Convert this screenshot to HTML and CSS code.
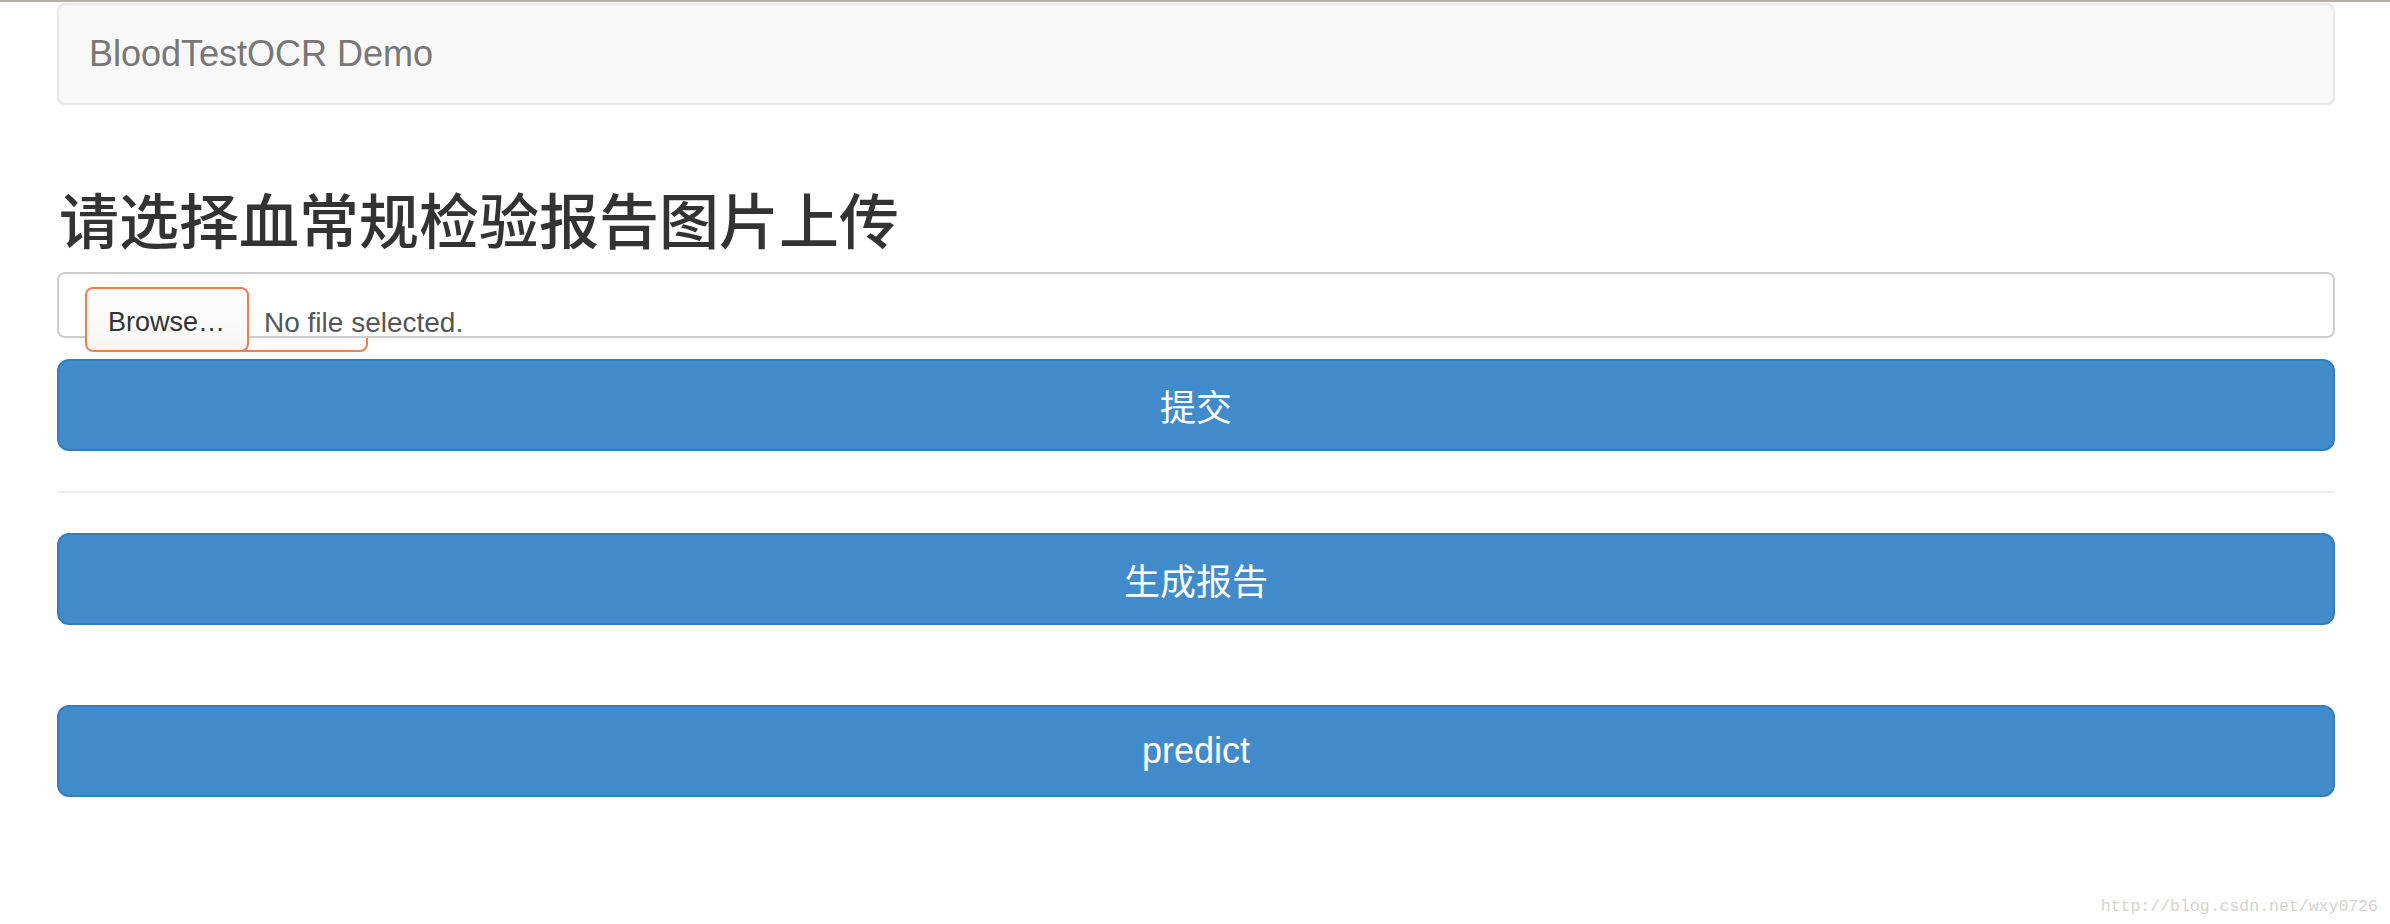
FILE: index.html
```html
<!DOCTYPE html>
<html lang="zh-CN">
<head>
<meta charset="utf-8">
<title>BloodTestOCR Demo</title>
<link rel="stylesheet" href="styles.css">
</head>
<body>
<div class="topline"></div>
<div class="container">
  <nav class="navbar">
    <span class="brand">BloodTestOCR Demo</span>
  </nav>
  <h2 class="title">请选择血常规检验报告图片上传</h2>
  <div class="file-box">
    <span class="browse">Browse…</span>
    <span class="file-name">No file selected.</span>
    <span class="focus-ghost"></span>
  </div>
  <button class="btn btn-first">提交</button>
  <hr class="divider">
  <button class="btn">生成报告</button>
  <button class="btn btn-last">predict</button>
</div>
<div class="watermark">http://blog.csdn.net/wxy0726</div>
</body>
</html>
```
FILE: styles.css
```css
html, body {
  margin: 0;
  padding: 0;
  background: #ffffff;
}
body {
  font-family: "Liberation Sans", Arial, "Noto Sans CJK SC", sans-serif;
  color: #333333;
  position: relative;
  height: 924px;
  overflow: hidden;
}
.topline {
  height: 2px;
  background: #b3afa9;
}
.container {
  padding: 0 55px 0 57px;
  display: flex;
  flex-direction: column;
}
.navbar {
  margin-top: 1px;
  height: 102px;
  box-sizing: border-box;
  background: #f8f8f8;
  border: 2px solid #e7e7e7;
  border-radius: 8px;
  display: flex;
  align-items: center;
  padding-left: 30px;
}
.brand {
  font-size: 36px;
  color: #777777;
  line-height: 40px;
}
.title {
  margin: 80px 0 21px 2px;
  font-family: "Noto Sans CJK SC", "Liberation Sans", sans-serif;
  font-weight: 500;
  font-size: 60px;
  line-height: 66px;
  color: #333333;
}
.file-box {
  position: relative;
  height: 66px;
  box-sizing: border-box;
  border: 2px solid #cccccc;
  border-radius: 8px;
  background: #ffffff;
  display: flex;
  align-items: flex-start;
  padding: 13px 0 0 26px;
}
.browse {
  position: relative;
  z-index: 1;
  box-sizing: border-box;
  height: 65px;
  width: 164px;
  border: 2px solid #ef7f52;
  border-radius: 8px;
  background: linear-gradient(#ffffff, #f6f6f6);
  font-size: 27px;
  color: #333333;
  padding: 5px 0 0 21px;
  line-height: 57px;
  white-space: nowrap;
}
.file-name {
  margin: 20px 0 0 15px;
  font-size: 28px;
  line-height: 32px;
  color: #555555;
}
.focus-ghost {
  position: absolute;
  left: 143px;
  top: 64px;
  width: 166px;
  height: 14px;
  box-sizing: border-box;
  border: 2px solid #ef7f52;
  border-top: none;
  border-radius: 0 0 8px 8px;
}
.btn {
  display: block;
  width: 100%;
  height: 92px;
  box-sizing: border-box;
  border: 2px solid #357ebd;
  border-radius: 12px;
  background: #428bca;
  color: #ffffff;
  font-family: "Liberation Sans", Arial, "Noto Sans CJK SC", sans-serif;
  font-size: 36px;
  padding: 0;
  cursor: pointer;
}
.btn-first {
  margin-top: 21px;
}
.divider {
  margin: 40px 0;
  border: 0;
  border-top: 2px solid #eeeeee;
  height: 0;
}
.btn-last {
  margin-top: 80px;
}
.watermark {
  position: absolute;
  right: 12px;
  bottom: 8px;
  font-family: "Liberation Mono", "Courier New", monospace;
  font-size: 16.5px;
  color: #d6d3ce;
}
```
